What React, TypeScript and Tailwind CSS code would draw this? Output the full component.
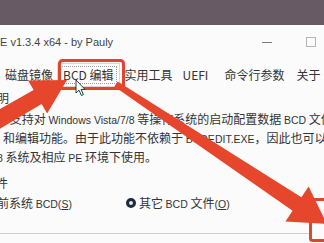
import type { ReactNode } from 'react'

function Latin({ children }: { children: ReactNode }) {
  return (
    <span className="font-['Liberation_Sans','Noto_Sans_CJK_SC',sans-serif] text-[10.5px]">
      {children}
    </span>
  )
}

function Tab({ label, className = '' }: { label: ReactNode; className?: string }) {
  return <span className={`whitespace-nowrap ${className}`}>{label}</span>
}

function Annotations() {
  return (
    <svg
      className="pointer-events-none absolute left-0 top-0"
      width={324}
      height={243}
      viewBox="0 0 324 243"
    >
      <rect x={59.5} y={60.5} width={64} height={28} rx={3} fill="none" stroke="#e0452e" strokeWidth={3} />
      <rect x={310.5} y={199.5} width={30} height={41} rx={2} fill="none" stroke="#e0452e" strokeWidth={3} />
      <polygon
        fill="#e6472c"
        points="67,80 47.1,113.5 41.6,103.9 -61.5,165.2 -71.1,148.8 33.6,90.1 28.1,80.5"
      />
      <polygon
        fill="#e6472c"
        points="327,224 285.4,221.5 292.6,210.7 114.3,86.5 117.7,81.5 301.4,197.3 308.6,186.5"
      />
      <g transform="translate(76 80)">
        <path d="M0 0 L0 13 L3 10.2 L5.4 15.5 L7.4 14.6 L5.1 9.4 L9 9.4 Z" fill="#fff" stroke="#222" strokeWidth={0.9} strokeLinejoin="round" />
      </g>
    </svg>
  )
}

export default function App() {
  return (
    <div className="relative h-[243px] w-[324px] overflow-hidden bg-[#fbfbfb] font-['Noto_Sans_CJK_SC',sans-serif] text-[12px] leading-none text-[#333]">
      <div className="h-[25px] bg-[#675a64]" />

      <div className="flex h-[34px] items-center">
        <span className="whitespace-nowrap font-['Liberation_Sans',sans-serif] text-[11px] text-[#444]">
          E v1.3.4 x64 - by Pauly
        </span>
        <div className="ml-auto flex items-center">
          <span className="block h-px w-[10px] bg-[#7a7a7a]" />
          <span className="ml-[34px] mr-[8px] block h-[10px] w-[10px] border border-[#b5b5b5]" />
        </div>
      </div>

      <div className="flex h-[32px] items-center">
        <Tab label="磁盘镜像" className="ml-[5px]" />
        <span className="ml-[4px] flex h-[24px] items-center border border-[#d8d8d8] bg-white px-[2px]">
          <span className="flex h-[18px] items-center border border-dotted border-[#9a9a9a] px-[2px] whitespace-nowrap">
            BCD 编辑
          </span>
        </span>
        <Tab label="实用工具" className="ml-[5px]" />
        <Tab label="UEFI" className="ml-[10px]" />
        <Tab label="命令行参数" className="ml-[16px]" />
        <Tab label="关于" className="ml-[12px]" />
      </div>

      <div className="ml-[-3px] h-[14px] leading-[14px]">明</div>

      <div className="mt-[5px] whitespace-nowrap leading-[18px]">
        <div>
          <Latin>E</Latin> 支持对 <Latin>Windows Vista/7/8</Latin> 等操作系统的启动配置数据 <Latin>BCD</Latin> 文件进行查看
        </div>
        <div className="pl-[3px]">
          和编辑功能。由于此功能不依赖于 <Latin>BCDEDIT.EXE</Latin>，因此也可以在 <Latin>XP</Latin>
        </div>
        <div className="ml-[-3px]">
          <Latin>8</Latin> 系统及相应 <Latin>PE</Latin> 环境下使用。
        </div>
      </div>

      <div className="ml-[-4px] mt-[9px] h-[14px] leading-[14px]">件</div>

      <div className="mt-[6px] flex h-[14px] items-center whitespace-nowrap">
        <span className="ml-[-3px]">
          前系统 <Latin>BCD(<span className="underline">S</span>)</Latin>
        </span>
        <span className="ml-[54px] block h-[10px] w-[10px] rounded-full border-[3px] border-[#1d2b3b] bg-[#dfe6ee]" />
        <span className="ml-[3px]">
          其它 <Latin>BCD</Latin> 文件<Latin>(<span className="underline">O</span>)</Latin>
        </span>
      </div>

      <div className="mt-[23px] h-px w-[310px] bg-[#cfcfcf]" />

      <Annotations />
    </div>
  )
}
